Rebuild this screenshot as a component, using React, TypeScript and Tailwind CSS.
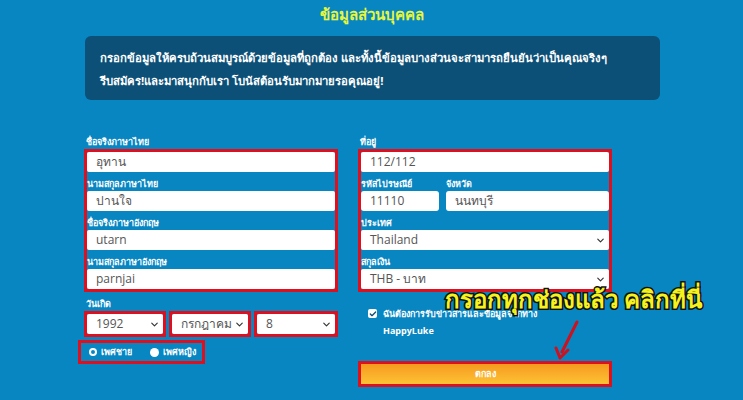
import React from 'react';
import { ChevronDown, Check } from 'lucide-react';

const font = "font-['Open_Sans','DejaVu_Sans',sans-serif]";

const Label = ({ text, className = '' }: { text: string; className?: string }) => (
  <div className={`flex items-end h-[19px] pb-[3px] text-[9px] font-bold text-white leading-none ${className}`}>
    {text}
  </div>
);

const Input = ({ value, className = '' }: { value: string; className?: string }) => (
  <div className={`h-5 bg-white rounded-[2px] flex items-center px-[9px] text-[12px] text-[#555] ${className}`}>
    {value}
  </div>
);

const Select = ({ value, className = '' }: { value: string; className?: string }) => (
  <div className={`h-5 bg-white rounded-[2px] flex items-center justify-between pl-[9px] pr-[3px] text-[12px] text-[#555] ${className}`}>
    <span>{value}</span>
    <ChevronDown size={11} strokeWidth={2.5} className="text-[#333]" />
  </div>
);

const App = () => {
  return (
    <div className={`relative w-[743px] h-[400px] overflow-hidden bg-[#0786c2] ${font}`}>
      {/* header */}
      <div className="h-[28px] flex items-center justify-center text-[15px] font-bold text-[#e6f53c]">
        ข้อมูลส่วนบุคคล
      </div>
      <div className="ml-[85px] mt-[8px] w-[575px] h-[64px] rounded-[6px] bg-[#0d5077] px-[15px] pt-[10px] text-[11.3px] font-bold text-white leading-[23px]">
        <div>กรอกข้อมูลให้ครบถ้วนสมบูรณ์ด้วยข้อมูลที่ถูกต้อง และทั้งนี้ข้อมูลบางส่วนจะสามารถยืนยันว่าเป็นคุณจริงๆ</div>
        <div>รีบสมัคร!และมาสนุกกับเรา โบนัสต้อนรับมากมายรอคุณอยู่!</div>
      </div>

      <div className="flex gap-[20px] ml-[84px] mt-[30px]">
        {/* left column */}
        <div className="w-[254px]">
          <Label text="ชื่อจริงภาษาไทย" className="h-[13px] pb-[2px] pl-[2px]" />
          <div className="border-[3px] border-[#dd1020]">
            <Input value="อุทาน" />
            <Label text="นามสกุลภาษาไทย" />
            <Input value="ปานใจ" />
            <Label text="ชื่อจริงภาษาอังกฤษ" />
            <Input value="utarn" />
            <Label text="นามสกุลภาษาอังกฤษ" />
            <Input value="parnjai" />
          </div>
          <Label text="วันเกิด" className="h-[14px] pb-[2px] pl-[2px]" />
          <div className="flex gap-[3px]">
            <div className="border-[3px] border-[#dd1020] w-[82px]"><Select value="1992" /></div>
            <div className="border-[3px] border-[#dd1020] w-[82px]"><Select value="กรกฎาคม" className="text-[11px]" /></div>
            <div className="border-[3px] border-[#dd1020] flex-1"><Select value="8" /></div>
          </div>
          <div className="-ml-[6px] mt-[3px] w-[127px] h-[24px] border-[3px] border-[#dd1020] flex items-center pl-[8px] gap-[4px] text-[9px] font-bold text-white">
            <span className="w-[8px] h-[8px] rounded-full border-[2px] border-white" />
            <span className="mr-[14px]">เพศชาย</span>
            <span className="w-[9px] h-[9px] rounded-full bg-white" />
            <span>เพศหญิง</span>
          </div>
        </div>

        {/* right column */}
        <div className="w-[254px]">
          <Label text="ที่อยู่" className="h-[13px] pb-[2px] pl-[2px]" />
          <div className="border-[3px] border-[#dd1020]">
            <Input value="112/112" />
            <div className="flex gap-[7px]">
              <div className="w-[78px]">
                <Label text="รหัสไปรษณีย์" />
                <Input value="11110" className="rounded-[3px]" />
              </div>
              <div className="flex-1">
                <Label text="จังหวัด" />
                <Input value="นนทบุรี" className="rounded-[3px]" />
              </div>
            </div>
            <Label text="ประเทศ" />
            <Select value="Thailand" />
            <Label text="สกุลเงิน" />
            <Select value="THB - บาท" />
          </div>
          <div className="flex gap-[6px] pl-[10px] mt-[16px]">
            <div className="mt-[1px] w-[9px] h-[9px] bg-white rounded-[2px] flex items-center justify-center shrink-0">
              <Check size={8} strokeWidth={4} className="text-[#0d5077]" />
            </div>
            <div className="text-[9px] font-bold text-white leading-[17px] -mt-[3px]">
              <div>ฉันต้องการรับข่าวสารและข้อมูลจากทาง</div>
              <div>HappyLuke</div>
            </div>
          </div>
          <div className="mt-[22px] h-[26px] border-[3px] border-[#dd1020] bg-gradient-to-b from-[#f59a1e] to-[#fdc235] flex items-center justify-center text-[9px] font-bold text-white">
            ตกลง
          </div>
        </div>
      </div>

      {/* annotation overlay */}
      <div className="absolute left-[445px] top-[287px] text-[24px] font-bold leading-none text-[#f6f21e] [-webkit-text-stroke:3px_#111] [paint-order:stroke_fill]">
        กรอกทุกช่องแล้ว คลิกที่นี่
      </div>
      <svg className="absolute left-[552px] top-[320px]" width="30" height="40" viewBox="0 0 30 40">
        <line x1="25" y1="2" x2="10" y2="32" stroke="#d0101c" strokeWidth="3" strokeLinecap="round" />
        <path d="M4 28 L8 38 L16 30" fill="none" stroke="#d0101c" strokeWidth="3" strokeLinejoin="round" strokeLinecap="round" />
      </svg>
    </div>
  );
};

export default App;
